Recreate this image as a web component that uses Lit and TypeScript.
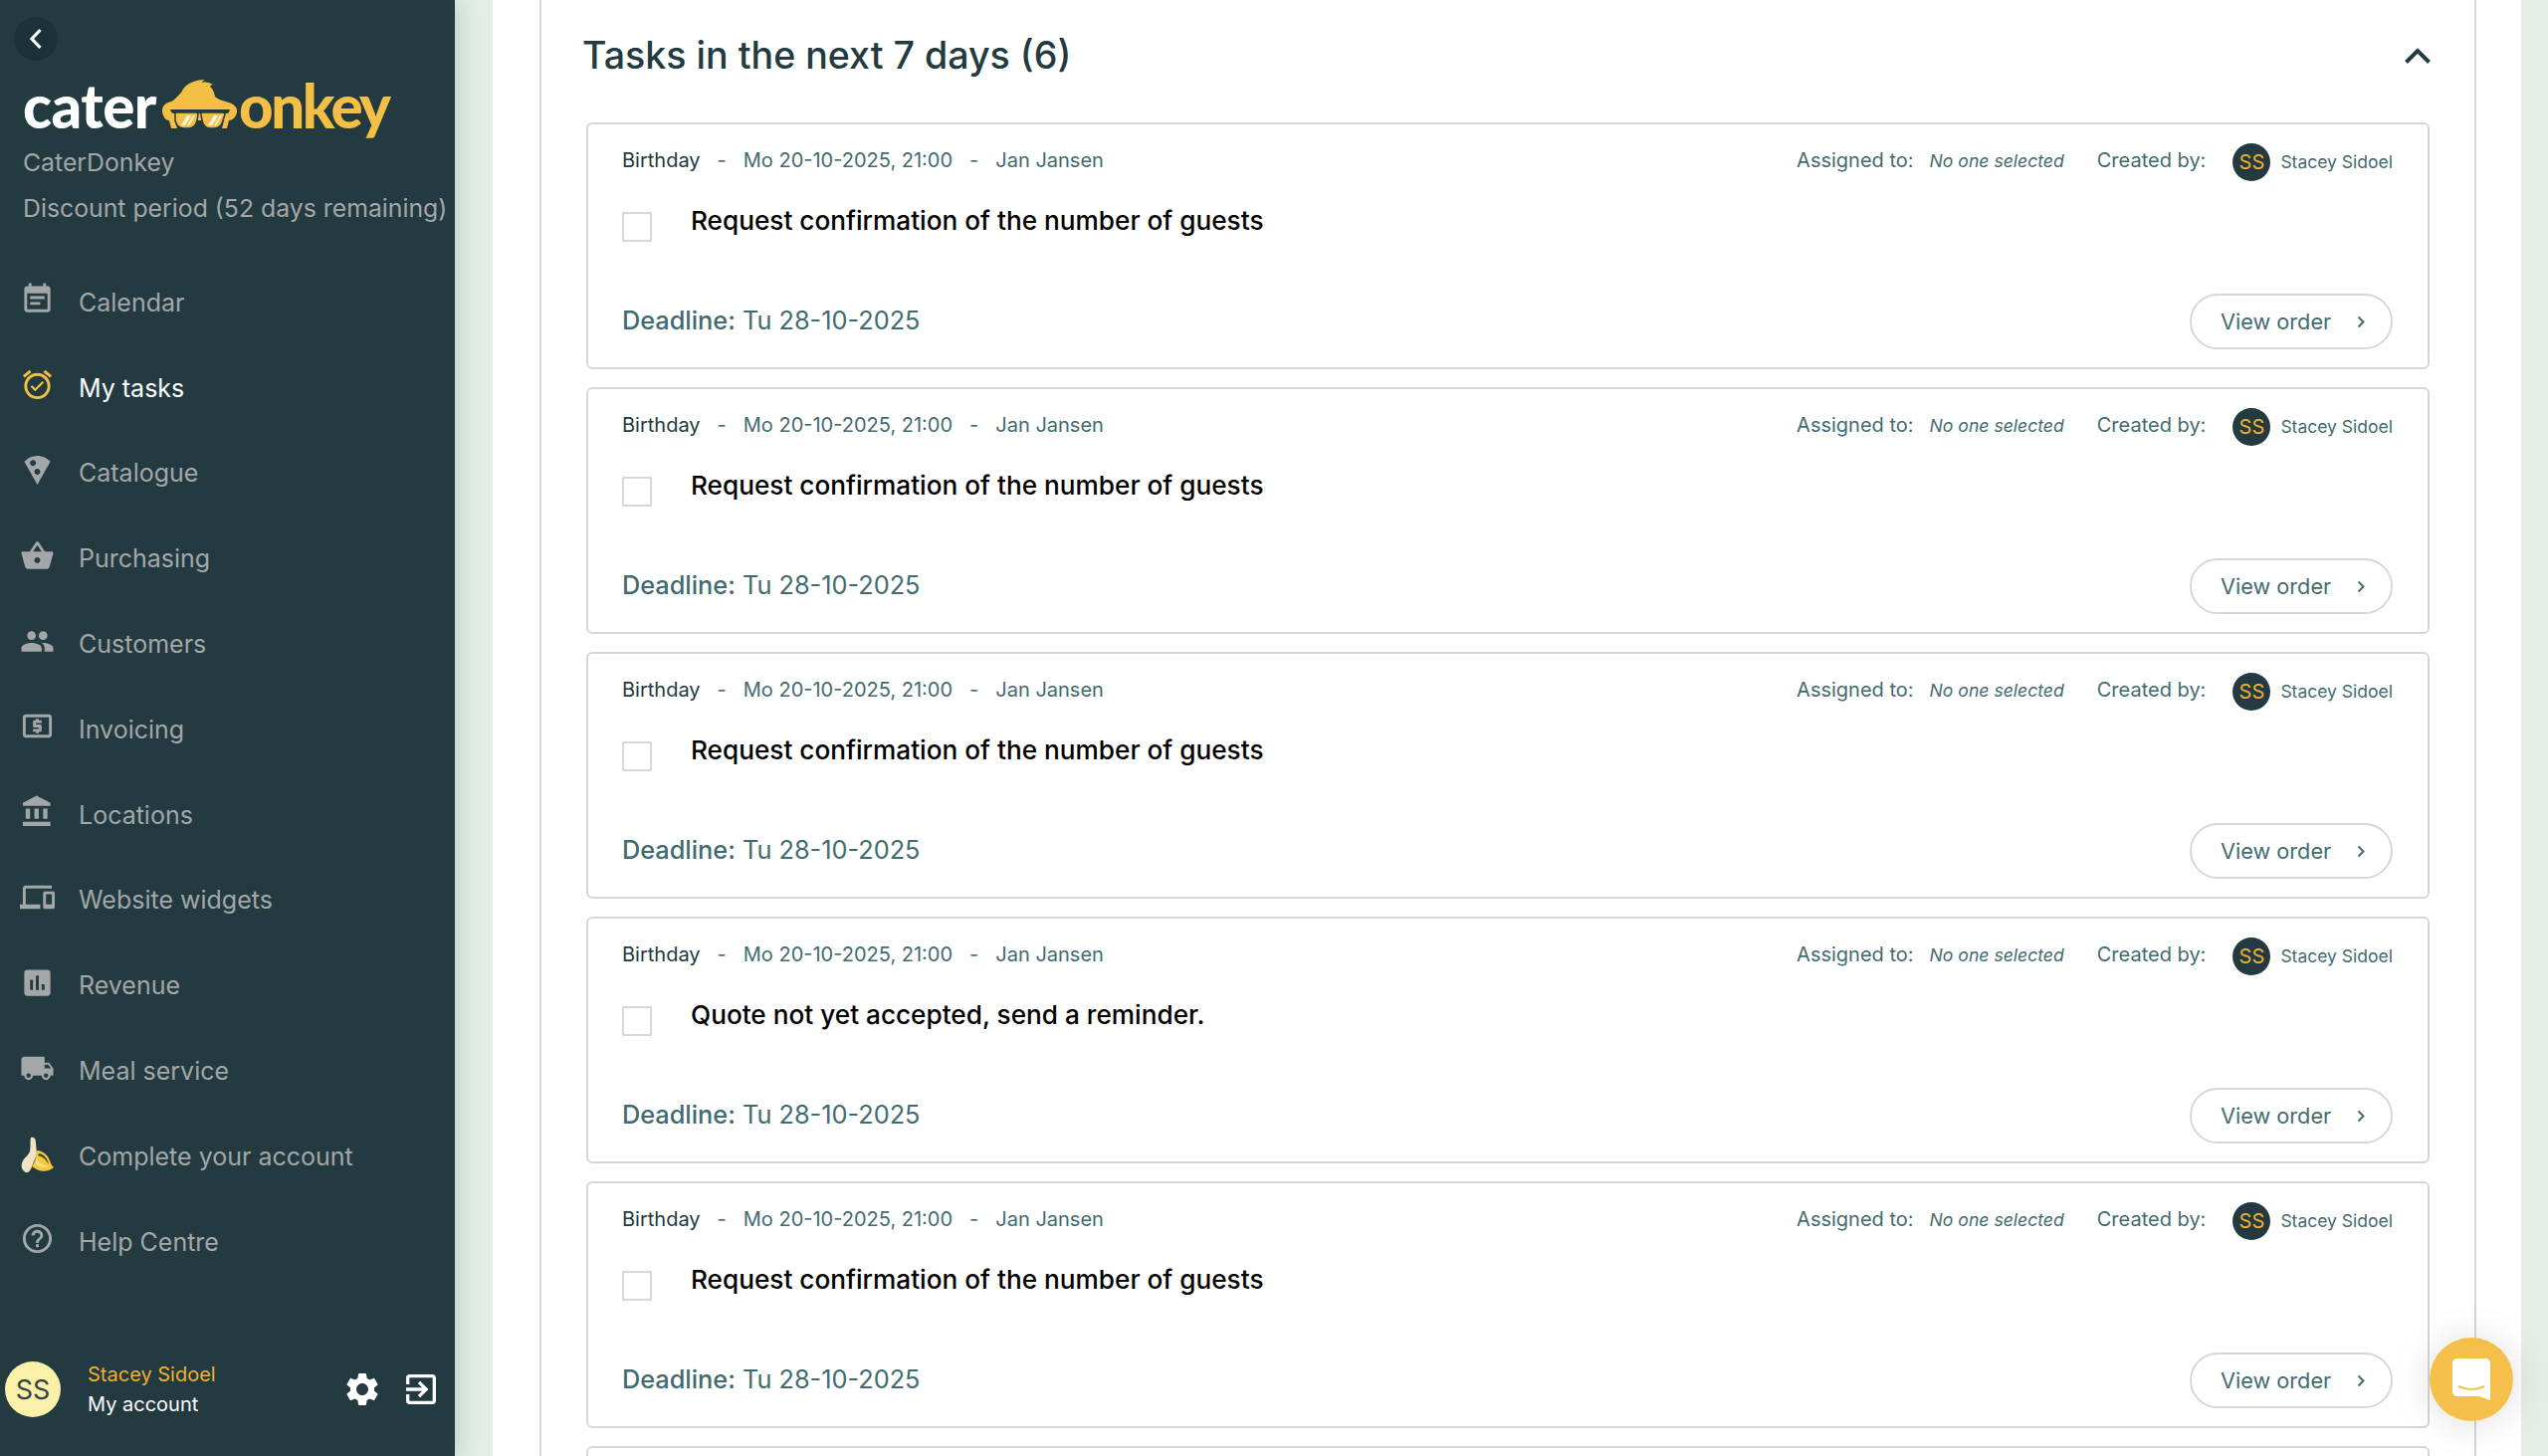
import { LitElement, html, css, svg } from 'lit';
import { customElement } from 'lit/decorators.js';

const ICONS: Record<string, string> = {
  calendar:
    'M17 10H7v2h10v-2zm2-7h-1V1h-2v2H8V1H6v2H5c-1.11 0-1.99.9-1.99 2L3 19c0 1.1.89 2 2 2h14c1.1 0 2-.9 2-2V5c0-1.1-.9-2-2-2zm0 16H5V8h14v11zm-5-5H7v2h7v-2z',
  tasks:
    'M22 5.72l-4.6-3.86-1.29 1.53 4.6 3.86L22 5.72zM7.88 3.39L6.6 1.86 2 5.71l1.29 1.53 4.59-3.85zM12 4c-4.97 0-9 4.03-9 9s4.02 9 9 9c4.97 0 9-4.03 9-9s-4.03-9-9-9zm0 16c-3.87 0-7-3.13-7-7s3.13-7 7-7 7 3.13 7 7-3.13 7-7 7zm-1.46-5.47L8.41 12.4l-1.06 1.06 3.18 3.18 6-6-1.06-1.06-4.93 4.95z',
  pizza:
    'M12 2C8.43 2 5.23 3.54 3.01 6L12 22l8.99-16C18.78 3.55 15.57 2 12 2zM7 7c0-1.1.9-2 2-2s2 .9 2 2-.9 2-2 2-2-.9-2-2zm5 8c-1.1 0-2-.9-2-2s.9-2 2-2 2 .9 2 2-.9 2-2 2z',
  basket:
    'M17.21 9l-4.38-6.56c-.19-.28-.51-.42-.83-.42-.32 0-.64.14-.83.43L6.79 9H2c-.55 0-1 .45-1 1 0 .09.01.18.04.27l2.54 9.27c.23.84 1 1.46 1.92 1.46h13c.92 0 1.69-.62 1.93-1.46l2.54-9.27L23 10c0-.55-.45-1-1-1h-4.79zM9 9l3-4.4L15 9H9zm3 8c-1.1 0-2-.9-2-2s.9-2 2-2 2 .9 2 2-.9 2-2 2z',
  people:
    'M16 11c1.66 0 2.99-1.34 2.99-3S17.66 5 16 5c-1.66 0-3 1.34-3 3s1.34 3 3 3zm-8 0c1.66 0 2.99-1.34 2.99-3S9.66 5 8 5C6.34 5 5 6.34 5 8s1.34 3 3 3zm0 2c-2.33 0-7 1.17-7 3.5V19h14v-2.5c0-2.33-4.67-3.5-7-3.5zm8 0c-.29 0-.62.02-.97.05 1.16.84 1.97 1.97 1.97 3.45V19h6v-2.5c0-2.33-4.67-3.5-7-3.5z',
  invoice:
    'M11 17h2v-1h1c.55 0 1-.45 1-1v-3c0-.55-.45-1-1-1h-3v-1h4V8h-2V7h-2v1h-1c-.55 0-1 .45-1 1v3c0 .55.45 1 1 1h3v1H9v2h2v1zm9-13H4c-1.11 0-1.99.89-1.99 2L2 18c0 1.11.89 2 2 2h16c1.11 0 2-.89 2-2V6c0-1.11-.89-2-2-2zm0 14H4V6h16v12z',
  bank: 'M4 10v7h3v-7H4zm6 0v7h3v-7h-3zM2 22h19v-3H2v3zm14-12v7h3v-7h-3zm-4.5-9L2 6v2h19V6l-9.5-5z',
  devices:
    'M4 6h18V4H4c-1.1 0-2 .9-2 2v11H0v3h14v-3H4V6zm19 2h-6c-.55 0-1 .45-1 1v10c0 .55.45 1 1 1h6c.55 0 1-.45 1-1V9c0-.55-.45-1-1-1zm-1 9h-4v-7h4v7z',
  revenue:
    'M19 3H5c-1.1 0-2 .9-2 2v14c0 1.1.9 2 2 2h14c1.1 0 2-.9 2-2V5c0-1.1-.9-2-2-2zM9 17H7v-7h2v7zm4 0h-2V7h2v10zm4 0h-2v-4h2v4z',
  truck:
    'M20 8h-3V4H3c-1.1 0-2 .9-2 2v11h2c0 1.66 1.34 3 3 3s3-1.34 3-3h6c0 1.66 1.34 3 3 3s3-1.34 3-3h2v-5l-3-4zM6 18.5c-.83 0-1.5-.67-1.5-1.5s.67-1.5 1.5-1.5 1.5.67 1.5 1.5-.67 1.5-1.5 1.5zm13.5-9l1.96 2.5H17V9.5h2.5zm-1.5 9c-.83 0-1.5-.67-1.5-1.5s.67-1.5 1.5-1.5 1.5.67 1.5 1.5-.67 1.5-1.5 1.5z',
  help: 'M11 18h2v-2h-2v2zm1-16C6.48 2 2 6.48 2 12s4.48 10 10 10 10-4.48 10-10S17.52 2 12 2zm0 18c-4.41 0-8-3.59-8-8s3.59-8 8-8 8 3.59 8 8-3.59 8-8 8zm0-14c-2.21 0-4 1.79-4 4h2c0-1.1.9-2 2-2s2 .9 2 2c0 2-3 1.75-3 5h2c0-2.25 3-2.5 3-5 0-2.21-1.79-4-4-4z',
  settings:
    'M19.14 12.94c.04-.3.06-.61.06-.94 0-.32-.02-.64-.07-.94l2.03-1.58c.18-.14.23-.41.12-.61l-1.92-3.32c-.12-.22-.37-.29-.59-.22l-2.39.96c-.5-.38-1.03-.7-1.62-.94l-.36-2.54c-.04-.24-.24-.41-.48-.41h-3.84c-.24 0-.43.17-.47.41l-.36 2.54c-.59.24-1.13.57-1.62.94l-2.39-.96c-.22-.08-.47 0-.59.22L2.74 8.87c-.12.21-.08.47.12.61l2.03 1.58c-.05.3-.09.63-.09.94s.02.64.07.94l-2.03 1.58c-.18.14-.23.41-.12.61l1.92 3.32c.12.22.37.29.59.22l2.39-.96c.5.38 1.03.7 1.62.94l.36 2.54c.05.24.24.41.48.41h3.84c.24 0 .44-.17.47-.41l.36-2.54c.59-.24 1.13-.56 1.62-.94l2.39.96c.22.08.47 0 .59-.22l1.92-3.32c.12-.22.07-.47-.12-.61l-2.01-1.58zM12 15.6c-1.98 0-3.6-1.62-3.6-3.6s1.62-3.6 3.6-3.6 3.6 1.62 3.6 3.6-1.62 3.6-3.6 3.6z',
  exit: 'M10.09 15.59L11.5 17l5-5-5-5-1.41 1.41L12.67 11H3v2h9.67l-2.58 2.59zM19 3H5c-1.11 0-2 .9-2 2v4h2V5h14v14H5v-4H3v4c0 1.1.89 2 2 2h14c1.1 0 2-.9 2-2V5c0-1.1-.9-2-2-2z',
};

const NAV = [
  { label: 'Calendar', icon: 'calendar' },
  { label: 'My tasks', icon: 'tasks', active: true },
  { label: 'Catalogue', icon: 'pizza' },
  { label: 'Purchasing', icon: 'basket' },
  { label: 'Customers', icon: 'people' },
  { label: 'Invoicing', icon: 'invoice' },
  { label: 'Locations', icon: 'bank' },
  { label: 'Website widgets', icon: 'devices' },
  { label: 'Revenue', icon: 'revenue' },
  { label: 'Meal service', icon: 'truck' },
  { label: 'Complete your account', icon: 'banana' },
  { label: 'Help Centre', icon: 'help' },
];

const CONFIRM = 'Request confirmation of the number of guests';
const TASKS = [CONFIRM, CONFIRM, CONFIRM, 'Quote not yet accepted, send a reminder.', CONFIRM, CONFIRM];

const icon = (name: string) =>
  html`<svg class="icon" viewBox="0 0 24 24"><path fill="currentColor" d=${ICONS[name]}></path></svg>`;

const banana = html`<svg class="icon banana" viewBox="0 0 35 40">
  <path fill="#f0e3c4" d="M11 1c3-1 5 1 5 5l1 12-5 12c-1 4-4 7-6 6-4-2-5-6-4-9 1-5 6-7 8-12 1-4 0-11 1-14z"></path>
  <path fill="#f6c83e" d="M17 14c6 0 12 5 14 13 1 2 2 3 3 4-3 3-10 5-15 3-3-1-5-3-7-4 2-3 4-6 5-16z"></path>
  <path fill="#3c3f2e" d="M19 17c5 1 9 5 10 11-3-5-6-8-11-9z"></path>
  <path fill="#f8df8a" d="M16 22c3 4 7 7 13 8-4 2-9 1-13-2z"></path>
</svg>`;

const mascot = svg`<svg class="mascot" viewBox="0 0 78 50">
  <path fill="#f3bf45" d="M1 31c0-5 4-8 9-9 3-1 6-5 10-9 2-3 3-7 10-10 4-2 9-3 14-3-2 1-3 2-3 3 4-1 8 0 11 2-2 0-3 1-3 2 3 2 4 6 5 10 3 3 8 4 14 6 6 2 9 6 8 10-1 5-5 8-8 8l-2 8h-5l2-8H14l2 8h-6l-2-8c-4 0-7-5-7-10z"></path>
  <path fill="#223a40" d="M9 30h60l-1 3c-1 1-2 1-3 1H13c-2 0-3-1-4-4z"></path>
  <path fill="#f3bf45" stroke="#223a40" stroke-width="1.5" d="M14 33h21c1 0 2 1 2 2l-1 6c-1 5-4 8-9 8h-4c-5 0-8-3-9-8zM41 33h21c1 0 2 1 2 2l-2 6c-1 5-4 8-9 8h-4c-4 0-7-3-8-8l-1-6c0-1 0-2 1-2z"></path>
  <path fill="#fff5d8" d="M26 36h4l-6 10h-4zM32 36h2l-6 10h-2zM53 36h4l-6 10h-4zM59 36h2l-6 10h-2z"></path>
</svg>`;

@customElement('app-root')
export class AppRoot extends LitElement {
  static styles = css`
    :host {
      display: flex;
      height: 100vh;
      overflow: hidden;
      background: #e4eee6;
      font-family: 'Inter', 'Liberation Sans', sans-serif;
      color: #426b70;
    }

    .sidebar {
      position: relative;
      flex: none;
      width: 457px;
      display: flex;
      flex-direction: column;
      background: #223a40;
      box-shadow: 4px 0 22px rgba(34, 58, 64, 0.18);
      color: #a3a7a7;
    }

    .back {
      width: 44px;
      height: 44px;
      margin: 17px 0 0 14px;
      border-radius: 50%;
      background: #1b3338;
      display: flex;
      align-items: center;
      justify-content: center;
    }

    .back svg {
      width: 14px;
      height: 22px;
    }

    .logo {
      display: flex;
      align-items: flex-start;
      height: 58px;
      margin: 16px 0 0 23px;
      font-family: 'Lato', sans-serif;
      font-weight: 900;
      font-size: 60px;
      line-height: 58px;
      letter-spacing: -0.5px;
      color: #fff;
    }

    .logo .rest {
      color: #f3bf45;
      margin-left: 0;
      letter-spacing: -2.5px;
    }

    .mascot {
      width: 78px;
      height: 50px;
      margin: 3px 0 0 5px;
    }

    .company {
      margin: 5px 0 0 23px;
      font-size: 24.8px;
      line-height: 46px;
      white-space: nowrap;
    }

    nav {
      margin-top: 29px;
      display: flex;
      flex-direction: column;
    }

    .nav-item {
      height: 85.8px;
      display: flex;
      align-items: center;
      gap: 24px;
      padding-left: 20px;
      font-size: 25px;
    }

    .nav-item .icon {
      width: 35px;
      height: 35px;
      flex: none;
      margin-top: -6px;
    }

    .nav-item .icon.banana {
      height: 40px;
      margin-top: 0;
    }

    .nav-item.active {
      color: #fff;
    }

    .nav-item.active .icon {
      color: #f3bf45;
    }

    .account {
      margin-top: auto;
      margin-bottom: 37px;
      display: flex;
      align-items: center;
      padding-left: 5px;
      color: #fff;
    }

    .account .avatar {
      width: 56px;
      height: 56px;
      flex: none;
      border-radius: 50%;
      background: #faf0a8;
      color: #33424a;
      font-size: 27px;
      display: flex;
      align-items: center;
      justify-content: center;
    }

    .account .who {
      margin-left: 27px;
      font-size: 20px;
      line-height: 30px;
      flex: 1;
    }

    .account .name {
      color: #eeb031;
    }

    .account .tool {
      width: 40px;
      height: 40px;
      color: #fff;
      flex: none;
    }

    .account .tool + .tool {
      margin: 0 14px 0 19px;
    }

    .content {
      flex: 1;
      min-width: 0;
      margin: 0 27px 0 38px;
      padding: 0 45px 0 47px;
      background: #fff;
    }

    .panel {
      height: 100%;
      padding: 0 45px;
      border-left: 2px solid #d5d9d4;
      border-right: 2px solid #d5d9d4;
      box-sizing: border-box;
    }

    .panel-head {
      height: 123px;
      box-sizing: border-box;
      display: flex;
      align-items: flex-start;
      justify-content: space-between;
      padding-top: 32px;
      color: #223a40;
      font-size: 37.6px;
      font-weight: 500;
      line-height: 48px;
    }

    .panel-head span {
      margin-left: -4px;
    }

    .panel-head svg {
      width: 30px;
      height: 20px;
      margin: 14px -3px 0 0;
    }

    .cards {
      display: flex;
      flex-direction: column;
      gap: 18px;
    }

    .card {
      flex: none;
      height: 248px;
      box-sizing: border-box;
      padding: 17px 35px 0 34px;
      border: 2px solid #d5d9d4;
      border-radius: 6px;
      display: flex;
      flex-direction: column;
    }

    .meta {
      display: flex;
      align-items: center;
      height: 38px;
      font-size: 20px;
      white-space: nowrap;
    }

    .meta .type {
      color: #223a40;
    }

    .meta .sep {
      margin: 0 17px;
    }

    .meta .spacer {
      flex: 1;
    }

    .meta .none {
      font-style: italic;
      font-size: 17.6px;
      margin-left: 16px;
    }

    .meta .created {
      margin-left: 33px;
    }

    .meta .mini {
      width: 38px;
      height: 38px;
      margin: 3px 0 0 27px;
      border-radius: 50%;
      background: #223a40;
      color: #eeb031;
      font-size: 20px;
      display: flex;
      align-items: center;
      justify-content: center;
    }

    .meta .creator {
      margin: 3px 0 0 10px;
      font-size: 17.5px;
    }

    .todo {
      display: flex;
      align-items: flex-start;
      margin-top: 23px;
      color: #000;
      font-size: 26.2px;
      font-weight: 500;
      line-height: 38px;
    }

    .todo input {
      appearance: none;
      width: 30px;
      height: 30px;
      margin: 10px 39px 0 0;
      border: 2px solid #d8d8d8;
      box-sizing: border-box;
      background: #fff;
      flex: none;
    }

    .foot {
      display: flex;
      align-items: center;
      justify-content: space-between;
      margin-top: 52px;
      font-size: 25.3px;
    }

    .foot .deadline {
      margin-top: -3px;
    }

    .foot b {
      font-weight: 500;
    }

    .view {
      width: 204px;
      height: 56px;
      box-sizing: border-box;
      display: flex;
      align-items: center;
      justify-content: space-between;
      padding: 0 26px 0 29px;
      border: 2px solid #d5d9d4;
      border-radius: 28px;
      background: #fff;
      color: #426b70;
      font: inherit;
      font-size: 21.7px;
    }

    .view svg {
      width: 8px;
      height: 13px;
    }

    .chat {
      position: absolute;
      left: 2441px;
      top: 1344px;
      width: 84px;
      height: 84px;
      border-radius: 50%;
      background: #f4c04a;
      box-shadow: 0 2px 40px rgba(0, 0, 0, 0.14);
      display: flex;
      align-items: center;
      justify-content: center;
    }

    .chat svg {
      width: 38px;
      height: 42px;
    }
  `;

  renderCard(title: string) {
    return html`
      <article class="card">
        <div class="meta">
          <span class="type">Birthday</span>
          <span class="sep">-</span>
          <span>Mo 20-10-2025, 21:00</span>
          <span class="sep">-</span>
          <span>Jan Jansen</span>
          <span class="spacer"></span>
          <span>Assigned to:</span>
          <span class="none">No one selected</span>
          <span class="created">Created by:</span>
          <span class="mini">SS</span>
          <span class="creator">Stacey Sidoel</span>
        </div>
        <label class="todo"><input type="checkbox" /><span>${title}</span></label>
        <div class="foot">
          <span class="deadline"><b>Deadline:</b> Tu 28-10-2025</span>
          <button class="view">
            View order
            <svg viewBox="0 0 8 13"><path d="M1.5 1.5 6.5 6.5 1.5 11.5" fill="none" stroke="currentColor" stroke-width="2"></path></svg>
          </button>
        </div>
      </article>
    `;
  }

  render() {
    return html`
      <aside class="sidebar">
        <div class="back">
          <svg viewBox="0 0 14 22"><path d="M11.5 2 3 11l8.5 9" fill="none" stroke="#fff" stroke-width="3.2"></path></svg>
        </div>
        <div class="logo"><span>cater</span>${mascot}<span class="rest">onkey</span></div>
        <div class="company">CaterDonkey<br />Discount period (52 days remaining)</div>
        <nav>
          ${NAV.map(
            (n) => html`
              <div class="nav-item ${n.active ? 'active' : ''}">
                ${n.icon === 'banana' ? banana : icon(n.icon)}<span>${n.label}</span>
              </div>
            `
          )}
        </nav>
        <div class="account">
          <div class="avatar">SS</div>
          <div class="who">
            <div class="name">Stacey Sidoel</div>
            <div>My account</div>
          </div>
          <svg class="tool" viewBox="0 0 24 24"><path fill="currentColor" d=${ICONS.settings}></path></svg>
          <svg class="tool" viewBox="0 0 24 24"><path fill="currentColor" d=${ICONS.exit}></path></svg>
        </div>
      </aside>
      <main class="content">
        <div class="panel">
          <header class="panel-head">
            <span>Tasks in the next 7 days (6)</span>
            <svg viewBox="0 0 30 20"><path d="M3.5 16.5 15 5l11.5 11.5" fill="none" stroke="#223a40" stroke-width="4"></path></svg>
          </header>
          <div class="cards">${TASKS.map((t) => this.renderCard(t))}</div>
        </div>
      </main>
      <div class="chat">
        <svg viewBox="0 0 38 42">
          <path fill="#fff" d="M5 0h28c3 0 5 2 5 5v37l-11-4H5c-3 0-5-2-5-5V5c0-3 2-5 5-5z"></path>
          <path d="M6 28c8 4 18 4 26 0" fill="none" stroke="#f4c04a" stroke-width="2"></path>
        </svg>
      </div>
    `;
  }
}
